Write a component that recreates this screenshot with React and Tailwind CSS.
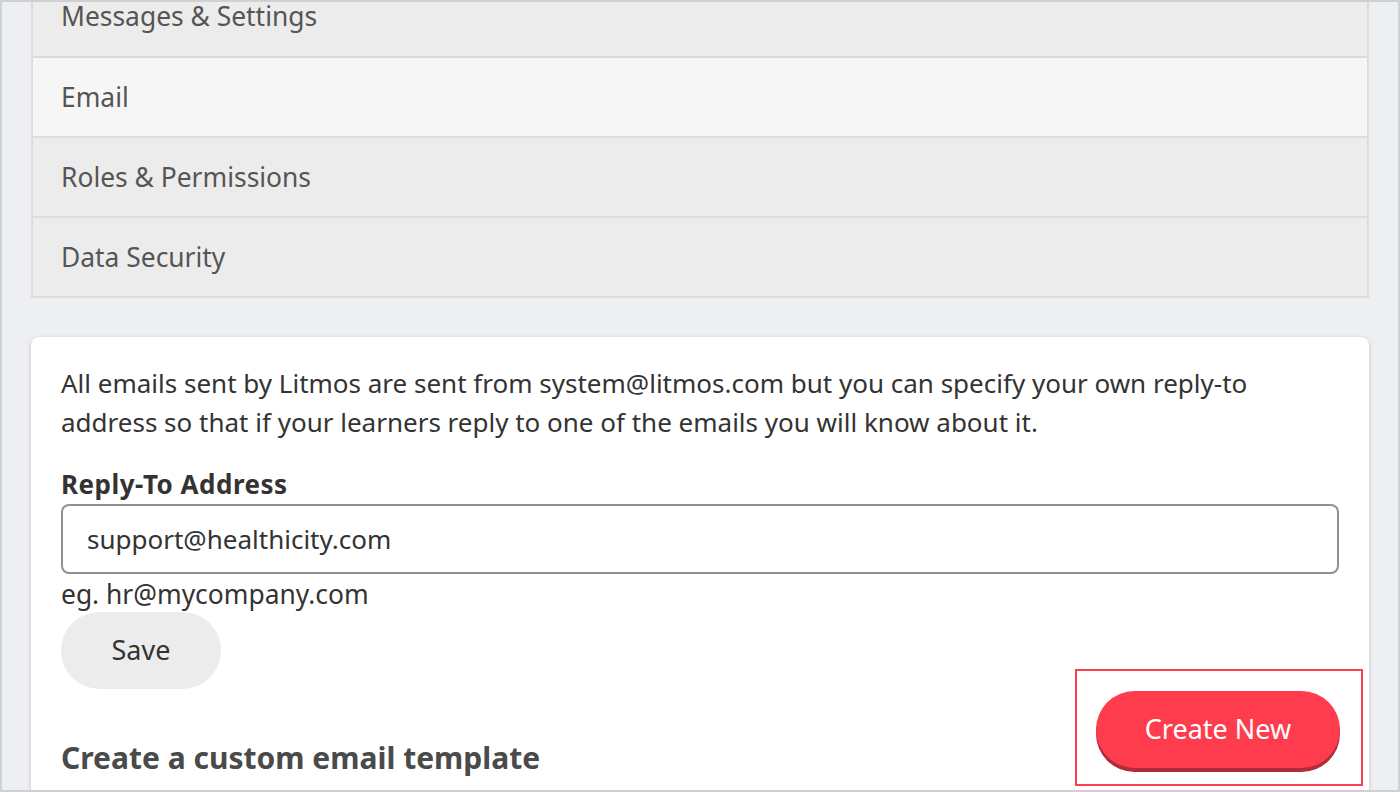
export default function App() {
  const items = [
    { label: 'Messages & Settings', active: false },
    { label: 'Email', active: true },
    { label: 'Roles & Permissions', active: false },
    { label: 'Data Security', active: false },
  ]

  return (
    <div className="h-[792px] w-[1400px] overflow-hidden border-2 border-[#cfd0d2] bg-[#eeeff1] font-['Noto_Sans',sans-serif]">
      <div className="-mt-[26px] px-[29px]">
        <div className="border-x-2 border-b-2 border-[#dcdcdc]">
          {items.map((it, i) => (
            <div
              key={it.label}
              className={`flex h-[80px] items-center px-[28px] pt-[1px] text-[26.4px] text-[#555] ${i > 0 ? 'border-t-2 border-[#dcdcdc]' : ''} ${it.active ? 'bg-[#f6f6f6]' : 'bg-[#ececec]'}`}
            >
              {it.label}
            </div>
          ))}
        </div>

        <div className="mt-[39px] rounded-[8px] bg-white px-[30px] pt-[27px] pb-[40px] shadow-[0_1px_4px_rgba(0,0,0,0.18)]">
          <p className="text-[26px] leading-[39px] text-[#333]">
            All emails sent by Litmos are sent from system@litmos.com but you can specify your own reply-to address so that if your learners reply to one of the emails you will know about it.
          </p>
          <label className="mt-[27px] block text-[26px] font-bold leading-[30px] tracking-[0.5px] text-[#333]">Reply-To Address</label>
          <div className="mt-[5px] flex h-[70px] items-center rounded-[8px] border-2 border-[#89919a] px-[24px] text-[26px] text-[#333]">
            support@healthicity.com
          </div>
          <div className="mt-[4px] text-[26.4px] leading-[32px] text-[#333]">eg. hr@mycompany.com</div>
          <div className="flex items-start justify-between">
            <div className="pt-[2px]">
              <button className="h-[77px] w-[160px] rounded-full bg-[#ececec] text-[27px] text-[#333]">Save</button>
              <h2 className="mt-[46px] text-[30px] font-bold text-[#4a4a4a]">Create a custom email template</h2>
            </div>
            <div className="mt-[59px] -mr-[24px] border-2 border-[#ff3f50] pl-[19px] pr-[21px] pt-[20px] pb-[16px]">
              <button className="h-[77px] w-[244px] rounded-full bg-[#ff3b4e] text-[27px] text-white shadow-[0_4px_0_#b02a38]">
                Create New
              </button>
            </div>
          </div>
        </div>
      </div>
    </div>
  )
}
